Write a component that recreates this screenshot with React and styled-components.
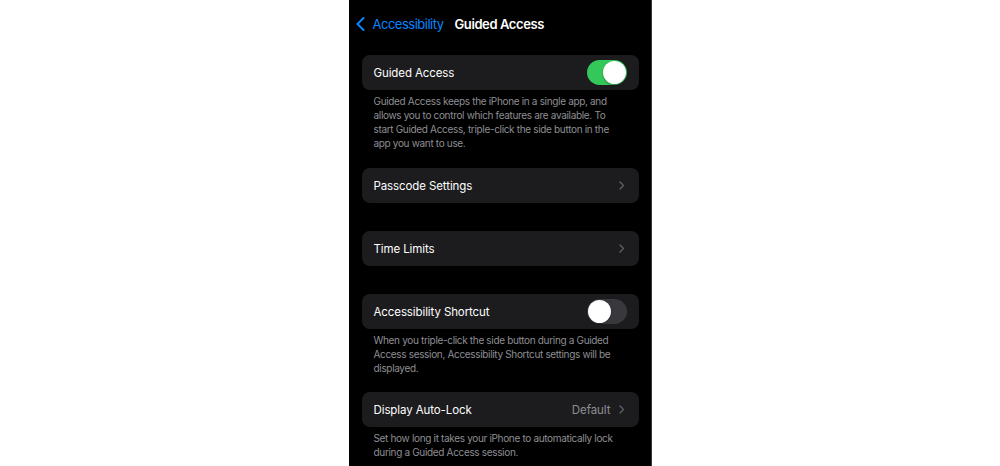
import React from 'react';
import styled, { createGlobalStyle } from 'styled-components';

const GlobalStyle = createGlobalStyle`
  html, body {
    margin: 0;
    padding: 0;
    background: #ffffff;
    height: 100%;
  }
  #root {
    height: 100%;
  }
`;

const Page = styled.div`
  height: 466px;
  display: flex;
  justify-content: center;
  background: #ffffff;
`;

const Screen = styled.div`
  width: 303px;
  height: 466px;
  background: #000000;
  border-right: 1px solid #3a3a3a;
  box-sizing: border-box;
  padding: 0 12px 0 13px;
  font-family: Inter, "Liberation Sans", Arial, sans-serif;
  overflow: hidden;
`;

const NavBar = styled.div`
  height: 46px;
  display: flex;
  align-items: center;
  margin-left: -6px;
  padding-top: 1px;
  box-sizing: border-box;
`;

const BackButton = styled.div`
  display: flex;
  align-items: center;
  gap: 8px;
  color: #0a84ff;
  font-size: 13px;
  letter-spacing: -0.5px;
`;

const NavTitle = styled.div`
  margin-left: 11px;
  color: #ffffff;
  font-size: 13px;
  font-weight: 600;
  letter-spacing: -0.4px;
`;

const Group = styled.section`
  margin-top: ${(p) => p.$gap}px;
`;

const Card = styled.div`
  height: 35px;
  background: #1c1c1e;
  border-radius: 8px;
  display: flex;
  align-items: center;
  padding: 0 12px;
`;

const Label = styled.div`
  flex: 1;
  color: #ffffff;
  font-size: 11.5px;
  letter-spacing: -0.1px;
  padding-top: 1px;
`;

const Value = styled.div`
  color: #8e8e93;
  font-size: 11.5px;
  margin-right: 8px;
  letter-spacing: -0.05px;
  padding-top: 1px;
`;

const Footer = styled.p`
  margin: 0;
  padding: 4px 12px 0 12px;
  color: #8e8e93;
  font-size: 10px;
  line-height: 14px;
  letter-spacing: -0.33px;
`;

const Track = styled.div`
  width: 40px;
  height: 25px;
  border-radius: 13px;
  background: ${(p) => (p.$on ? '#34c759' : '#39393d')};
  display: flex;
  align-items: center;
  justify-content: ${(p) => (p.$on ? 'flex-end' : 'flex-start')};
  padding: 0 1px;
  box-sizing: border-box;
`;

const Knob = styled.div`
  width: 23px;
  height: 23px;
  border-radius: 50%;
  background: #ffffff;
  box-shadow: 0 1px 2px rgba(0, 0, 0, 0.35);
`;

const Toggle = ({ on }) => (
  <Track $on={on}>
    <Knob />
  </Track>
);

const Chevron = () => (
  <svg width="6" height="9" viewBox="0 0 6 9" style={{ marginRight: 2 }}>
    <path d="M1 1 L4.5 4.5 L1 8" fill="none" stroke="#5e5e63" strokeWidth="1.4" strokeLinecap="round" strokeLinejoin="round" />
  </svg>
);

const BackChevron = () => (
  <svg width="9" height="14" viewBox="0 0 9 14">
    <path d="M7.5 1 L1.5 7 L7.5 13" fill="none" stroke="#0a84ff" strokeWidth="2" strokeLinecap="round" strokeLinejoin="round" />
  </svg>
);

export default function App() {
  return (
    <>
      <GlobalStyle />
      <Page>
        <Screen>
          <NavBar>
            <BackButton>
              <BackChevron />
              Accessibility
            </BackButton>
            <NavTitle>Guided Access</NavTitle>
          </NavBar>

          <Group $gap={9}>
            <Card>
              <Label>Guided Access</Label>
              <Toggle on />
            </Card>
            <Footer>
              Guided Access keeps the iPhone in a single app, and allows you to control which features are available. To start Guided Access, triple-click the side button in the app you want to use.
            </Footer>
          </Group>

          <Group $gap={18}>
            <Card>
              <Label>Passcode Settings</Label>
              <Chevron />
            </Card>
          </Group>

          <Group $gap={28}>
            <Card>
              <Label>Time Limits</Label>
              <Chevron />
            </Card>
          </Group>

          <Group $gap={28}>
            <Card>
              <Label>Accessibility Shortcut</Label>
              <Toggle />
            </Card>
            <Footer>
              When you triple-click the side button during a Guided Access session, Accessibility Shortcut settings will be displayed.
            </Footer>
          </Group>

          <Group $gap={17}>
            <Card>
              <Label>Display Auto-Lock</Label>
              <Value>Default</Value>
              <Chevron />
            </Card>
            <Footer>
              Set how long it takes your iPhone to automatically lock during a Guided Access session.
            </Footer>
          </Group>
        </Screen>
      </Page>
    </>
  );
}
